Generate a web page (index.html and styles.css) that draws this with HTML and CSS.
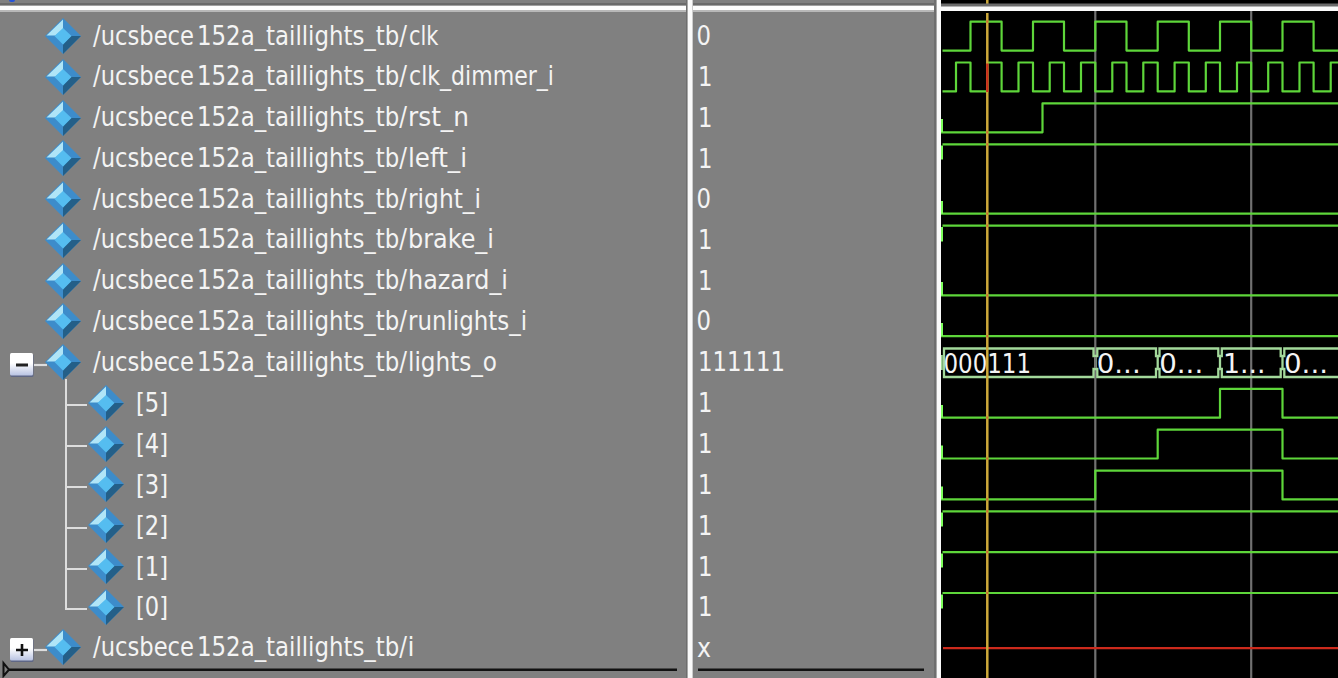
FILE: index.html
```html
<!DOCTYPE html>
<html lang="en">
<head>
<meta charset="utf-8">
<title>Wave</title>
<link rel="stylesheet" href="styles.css">
</head>
<body>
<svg class="defs" width="0" height="0">
  <defs>
    <linearGradient id="face" x1="0" y1="0" x2="0" y2="1"><stop offset="0.45" stop-color="#fff"/><stop offset="1" stop-color="#b9c3e2"/></linearGradient>
    <symbol id="gem" viewBox="0 0 36 36">
      <path fill="#3d8cca" d="M18 0 36 18 18 36 0 18z"/>
      <path fill="#b0e5f7" d="M18 1.500V11L10.500 17.500H1.500z"/>
      <path fill="#245f88" d="M36 18 18 36V26.500L26 18z"/>
      <path fill="#55bdf0" d="M18 10 26.500 18 18 26.500 9.500 18z"/>
    </symbol>
    <symbol id="box" viewBox="0 0 26 26">
      <rect x="1.500" y="2" width="23" height="23" rx="1.500" fill="#5f6785"/>
      <rect x="1" y="1" width="23" height="22.500" rx="1.500" fill="url(#face)"/>
    </symbol>
  </defs>
</svg>
<main class="wave">
  <section class="pane names">
    <div class="bar"><i class="dot"></i></div>
    <div class="rows">
      <div class="row"><svg class="gem"><use href="#gem"/></svg><svg class="label"><text y="29"><tspan x="0" textLength="101" lengthAdjust="spacingAndGlyphs">/ucsbece</tspan><tspan x="104" textLength="210" lengthAdjust="spacingAndGlyphs">152a_taillights_tb/</tspan><tspan x="316" textLength="29.500" lengthAdjust="spacingAndGlyphs">clk</tspan></text></svg></div>
      <div class="row"><svg class="gem"><use href="#gem"/></svg><svg class="label"><text y="29"><tspan x="0" textLength="101" lengthAdjust="spacingAndGlyphs">/ucsbece</tspan><tspan x="104" textLength="210" lengthAdjust="spacingAndGlyphs">152a_taillights_tb/</tspan><tspan x="316" textLength="145" lengthAdjust="spacingAndGlyphs">clk_dimmer_i</tspan></text></svg></div>
      <div class="row"><svg class="gem"><use href="#gem"/></svg><svg class="label"><text y="29"><tspan x="0" textLength="101" lengthAdjust="spacingAndGlyphs">/ucsbece</tspan><tspan x="104" textLength="210" lengthAdjust="spacingAndGlyphs">152a_taillights_tb/</tspan><tspan x="315" textLength="61" lengthAdjust="spacingAndGlyphs">rst_n</tspan></text></svg></div>
      <div class="row"><svg class="gem"><use href="#gem"/></svg><svg class="label"><text y="29"><tspan x="0" textLength="101" lengthAdjust="spacingAndGlyphs">/ucsbece</tspan><tspan x="104" textLength="210" lengthAdjust="spacingAndGlyphs">152a_taillights_tb/</tspan><tspan x="315" textLength="59" lengthAdjust="spacingAndGlyphs">left_i</tspan></text></svg></div>
      <div class="row"><svg class="gem"><use href="#gem"/></svg><svg class="label"><text y="29"><tspan x="0" textLength="101" lengthAdjust="spacingAndGlyphs">/ucsbece</tspan><tspan x="104" textLength="210" lengthAdjust="spacingAndGlyphs">152a_taillights_tb/</tspan><tspan x="315" textLength="73" lengthAdjust="spacingAndGlyphs">right_i</tspan></text></svg></div>
      <div class="row"><svg class="gem"><use href="#gem"/></svg><svg class="label"><text y="29"><tspan x="0" textLength="101" lengthAdjust="spacingAndGlyphs">/ucsbece</tspan><tspan x="104" textLength="210" lengthAdjust="spacingAndGlyphs">152a_taillights_tb/</tspan><tspan x="315" textLength="86" lengthAdjust="spacingAndGlyphs">brake_i</tspan></text></svg></div>
      <div class="row"><svg class="gem"><use href="#gem"/></svg><svg class="label"><text y="29"><tspan x="0" textLength="101" lengthAdjust="spacingAndGlyphs">/ucsbece</tspan><tspan x="104" textLength="210" lengthAdjust="spacingAndGlyphs">152a_taillights_tb/</tspan><tspan x="315" textLength="100" lengthAdjust="spacingAndGlyphs">hazard_i</tspan></text></svg></div>
      <div class="row"><svg class="gem"><use href="#gem"/></svg><svg class="label"><text y="29"><tspan x="0" textLength="101" lengthAdjust="spacingAndGlyphs">/ucsbece</tspan><tspan x="104" textLength="210" lengthAdjust="spacingAndGlyphs">152a_taillights_tb/</tspan><tspan x="315" textLength="119" lengthAdjust="spacingAndGlyphs">runlights_i</tspan></text></svg></div>
      <div class="row open"><svg class="toggle"><use href="#box" width="26" height="26"/><path d="M7 13H19" stroke="#222" stroke-width="3"/><path d="M25 13H38" stroke="#ddd" stroke-width="2.200"/></svg><svg class="gem"><use href="#gem"/></svg><svg class="label"><text y="29"><tspan x="0" textLength="101" lengthAdjust="spacingAndGlyphs">/ucsbece</tspan><tspan x="104" textLength="210" lengthAdjust="spacingAndGlyphs">152a_taillights_tb/</tspan><tspan x="315" textLength="89" lengthAdjust="spacingAndGlyphs">lights_o</tspan></text></svg></div>
      <div class="row child"><i class="branch"></i><svg class="gem"><use href="#gem"/></svg><svg class="label"><text x="0" y="30" textLength="32" lengthAdjust="spacingAndGlyphs">[5]</text></svg></div>
      <div class="row child"><i class="branch"></i><svg class="gem"><use href="#gem"/></svg><svg class="label"><text x="0" y="30" textLength="32" lengthAdjust="spacingAndGlyphs">[4]</text></svg></div>
      <div class="row child"><i class="branch"></i><svg class="gem"><use href="#gem"/></svg><svg class="label"><text x="0" y="30" textLength="32" lengthAdjust="spacingAndGlyphs">[3]</text></svg></div>
      <div class="row child"><i class="branch"></i><svg class="gem"><use href="#gem"/></svg><svg class="label"><text x="0" y="30" textLength="32" lengthAdjust="spacingAndGlyphs">[2]</text></svg></div>
      <div class="row child"><i class="branch"></i><svg class="gem"><use href="#gem"/></svg><svg class="label"><text x="0" y="30" textLength="32" lengthAdjust="spacingAndGlyphs">[1]</text></svg></div>
      <div class="row child last"><i class="branch"></i><svg class="gem"><use href="#gem"/></svg><svg class="label"><text x="0" y="30" textLength="32" lengthAdjust="spacingAndGlyphs">[0]</text></svg></div>
      <div class="row"><svg class="toggle"><use href="#box" width="26" height="26"/><path d="M7 13H19M13 7V19" stroke="#111" stroke-width="2.600"/><path d="M25 13H38" stroke="#ddd" stroke-width="2.200"/></svg><svg class="gem"><use href="#gem"/></svg><svg class="label"><text y="29"><tspan x="0" textLength="101" lengthAdjust="spacingAndGlyphs">/ucsbece</tspan><tspan x="104" textLength="210" lengthAdjust="spacingAndGlyphs">152a_taillights_tb/</tspan><tspan x="314.500" textLength="7" lengthAdjust="spacingAndGlyphs">i</tspan></text></svg></div>
    </div>
    <svg class="insert" width="687" height="18"><path d="M9 9.700H677" stroke="#111" stroke-width="2.600"/><path d="M3.500 3V16L9 9.700z" fill="#808080" stroke="#111" stroke-width="2"/></svg>
  </section>
  <div class="split"></div>
  <section class="pane values">
    <div class="bar"></div>
    <div class="rows">
      <div class="row"><svg class="label"><text x="0.500" y="29" textLength="14.500" lengthAdjust="spacingAndGlyphs">0</text></svg></div>
      <div class="row"><svg class="label"><text x="2" y="29.500" textLength="14.500" lengthAdjust="spacingAndGlyphs">1</text></svg></div>
      <div class="row"><svg class="label"><text x="2" y="29.500" textLength="14.500" lengthAdjust="spacingAndGlyphs">1</text></svg></div>
      <div class="row"><svg class="label"><text x="2" y="29.500" textLength="14.500" lengthAdjust="spacingAndGlyphs">1</text></svg></div>
      <div class="row"><svg class="label"><text x="0.500" y="29" textLength="14.500" lengthAdjust="spacingAndGlyphs">0</text></svg></div>
      <div class="row"><svg class="label"><text x="2" y="29.500" textLength="14.500" lengthAdjust="spacingAndGlyphs">1</text></svg></div>
      <div class="row"><svg class="label"><text x="2" y="29.500" textLength="14.500" lengthAdjust="spacingAndGlyphs">1</text></svg></div>
      <div class="row"><svg class="label"><text x="0.500" y="29" textLength="14.500" lengthAdjust="spacingAndGlyphs">0</text></svg></div>
      <div class="row"><svg class="label"><text x="2" y="29" textLength="87" lengthAdjust="spacingAndGlyphs">111111</text></svg></div>
      <div class="row"><svg class="label"><text x="2" y="30" textLength="14.500" lengthAdjust="spacingAndGlyphs">1</text></svg></div>
      <div class="row"><svg class="label"><text x="2" y="30" textLength="14.500" lengthAdjust="spacingAndGlyphs">1</text></svg></div>
      <div class="row"><svg class="label"><text x="2" y="30" textLength="14.500" lengthAdjust="spacingAndGlyphs">1</text></svg></div>
      <div class="row"><svg class="label"><text x="2" y="30" textLength="14.500" lengthAdjust="spacingAndGlyphs">1</text></svg></div>
      <div class="row"><svg class="label"><text x="2" y="30" textLength="14.500" lengthAdjust="spacingAndGlyphs">1</text></svg></div>
      <div class="row"><svg class="label"><text x="2" y="30" textLength="14.500" lengthAdjust="spacingAndGlyphs">1</text></svg></div>
      <div class="row"><svg class="label"><text x="1" y="29.500" textLength="14" lengthAdjust="spacingAndGlyphs">x</text></svg></div>
    </div>
    <svg class="insert" width="240" height="18"><path d="M5 9.700H231" stroke="#111" stroke-width="2.600"/></svg>
  </section>
  <div class="split"></div>
  <section class="pane plot">
    <svg width="397" height="678" viewBox="941 0 397 678">
      <path class="grid" d="M1095.300 11V678M1251.200 11V678"/>
      <g class="trace">
        <path d="M942.500 50.600H970.500V21.700H1001.600V50.600H1033V21.700H1064V50.600H1095.300V21.700H1126.500V50.600H1157.700V21.700H1188.800V50.600H1220V21.700H1251.200V50.600H1282.500V21.700H1313.600V50.600H1338"/>
        <path d="M942.500 91.400H956V62.500H970.500V91.400H987.300V62.500H1001.600V91.400H1018.500V62.500H1033V91.400H1049.700V62.500H1064V91.400H1081V62.500H1095.300V91.400H1112.300V62.500H1126.500V91.400H1143.300V62.500H1157.700V91.400H1174.600V62.500H1188.800V91.400H1205.800V62.500H1220V91.400H1237V62.500H1251.200V91.400H1268.200V62.500H1282.500V91.400H1299.500V62.500H1313.600V91.400H1330.700V62.500H1338"/>
        <path d="M941 132.300H1042.500V103.400H1338"/>
        <path d="M942.500 144.300H1338M941 213.700H1338M942.500 225.700H1338M941 295.400H1338M941 336.200H1338"/>
        <path d="M941 417.700H1220V388.800H1282.500V417.700H1338"/>
        <path d="M941 458.500H1157.700V429.700H1282.500V458.500H1338"/>
        <path d="M941 499.400H1095.300V470.600H1282.500V499.400H1338"/>
        <path d="M942.500 511.400H1338M942.500 552.200H1338M942.500 593H1338"/>
      </g>
      <path class="start" d="M941.500 119V132M941.500 145.500V159.500M941.500 201V213.700M941.500 227V241.500M941.500 282V295.400M941.500 323V336M941.500 405V417.700M941.500 445.500V458.500M941.500 486.500V499M941.500 512.500V526.500M941.500 553.500V567.500M941.500 594.500V608.500"/>
      <path class="bus" d="M941.500 355V370M1093.500 348.500H944V377H1093.500V369H1095.500V356H1093.500zM1097.300 348.500H1156V356H1157.700V369H1156V377H1097.300V369H1095.500V356H1097.300zM1159.500 348.500H1218.300V356H1220V369H1218.300V377H1159.500V369H1157.700V356H1159.500zM1221.800 348.500H1280.700V356H1282.500V369H1280.700V377H1221.800V369H1220V356H1221.800zM1338 348.500H1284.300V356H1282.500V369H1284.300V377H1338"/>
      <path class="grid" d="M1095.300 357V368"/>
      <path class="unknown" d="M943 648.200H1338"/>
      <path class="cursor" d="M987.300 0V4M987.300 13V678"/>
      <path class="unknown" d="M987.300 63.500V92"/>
      <path class="cross" d="M986.200 21.700h2.200M986.200 132.300h2.200M986.200 144.300h2.200M986.200 213.700h2.200M986.200 225.700h2.200M986.200 295.400h2.200M986.200 336.200h2.200M986.200 417.700h2.200M986.200 458.500h2.200M986.200 499.400h2.200M986.200 511.400h2.200M986.200 552.200h2.200M986.200 593h2.200"/>
      <g class="busvalue">
        <text x="943.500" y="373" textLength="87.500" lengthAdjust="spacingAndGlyphs">000111</text>
        <text x="1096.700" y="373" textLength="44" lengthAdjust="spacingAndGlyphs">0...</text>
        <text x="1159.200" y="373" textLength="44" lengthAdjust="spacingAndGlyphs">0...</text>
        <text x="1223" y="373" textLength="42.500" lengthAdjust="spacingAndGlyphs">1...</text>
        <text x="1284" y="373" textLength="44" lengthAdjust="spacingAndGlyphs">0...</text>
      </g>
      <path fill="#6b6b6b" d="M941 3.500h397v3.500h-397z"/>
      <path fill="#fafafa" d="M941 6.500h397v4.500h-397z"/>
    </svg>
  </section>
</main>
</body>
</html>
```

FILE: styles.css
```css
body {
  margin: 0;
  background: #808080;
}

.defs {
  position: absolute;
}

.wave {
  display: flex;
  width: 1338px;
  height: 678px;
  overflow: hidden;
}

.pane {
  display: flex;
  flex-direction: column;
  flex: none;
  position: relative;
  overflow: hidden;
  background: #808080;
}

.names { width: 686px; }
.values { width: 241px; }
.plot { width: 397px; background: #000; }
.plot svg { display: block; flex: none; }

.split {
  flex: none;
  width: 7px;
  background: linear-gradient(90deg, #6e6e6e 0 1.5px, #a8a8a8 1.5px 2.5px, #fafafa 2.5px 6.5px, #ccc 6.5px);
}

.bar {
  flex: none;
  box-sizing: border-box;
  height: 12px;
  background: linear-gradient(#808080 0 3.5px, #6a6a6a 3.5px 5px, #a0a0a0 5px 6.5px, #fdfdfd 6.5px 10.5px, #b8b8b8 10.5px);
}

.dot {
  display: block;
  width: 6px;
  height: 2px;
  margin-left: 9px;
  border-radius: 0 0 3px 3px;
  background: #2553d8;
}

.rows {
  padding-top: 3.6px;
}

.row {
  display: flex;
  align-items: center;
  height: 40.78px;
  padding-left: 45px;
  position: relative;
}

.gem {
  flex: none;
  width: 36px;
  height: 36px;
}

.label {
  flex: none;
  width: 500px;
  height: 40.78px;
  margin-left: 12px;
  overflow: visible;
}

text {
  font-family: "DejaVu Sans Condensed", "DejaVu Sans", sans-serif;
  font-stretch: condensed;
  font-size: 26px;
  fill: #f4f4f4;
}

.toggle {
  flex: none;
  width: 38px;
  height: 26px;
  margin: 5px -2px 0 -36px;
  overflow: visible;
}

.child {
  padding-left: 65px;
}

.child .gem {
  margin-left: 1px;
}

.branch {
  flex: none;
  align-self: flex-start;
  box-sizing: border-box;
  width: 22px;
  height: 24px;
  border-left: 2px solid #ddd;
  border-bottom: 2px solid #ddd;
}

/* trunk joining each child to the next one */
.child:not(.last)::before {
  content: "";
  position: absolute;
  left: 65px;
  top: 0;
  width: 2px;
  height: 42px;
  background: #ddd;
}

.open::after {
  content: "";
  position: absolute;
  left: 65px;
  bottom: -1px;
  width: 2px;
  height: 4px;
  background: #ddd;
}

.values .row { padding-left: 3px; }
.values .label { width: 200px; margin-left: 0; }

.insert {
  position: absolute;
  left: 0;
  top: 660px;
}

.plot path { fill: none; }
.plot path[fill] { fill: #6b6b6b; }
.plot path[fill="#fafafa"] { fill: #fafafa; }
.trace path { stroke: #5ed63a; stroke-width: 2.2; stroke-linejoin: round; }
.start { stroke: #7dff5c; stroke-width: 3; }
.grid { stroke: #707070; stroke-width: 2.2; }
.bus { stroke: #a3d99b; stroke-width: 2.3; }
.cursor { stroke: #cda93a; stroke-width: 2.5; }
.unknown { stroke: #cc2a1c; stroke-width: 2.3; }
.cross { stroke: #c5702c; stroke-width: 2.2; }
```
